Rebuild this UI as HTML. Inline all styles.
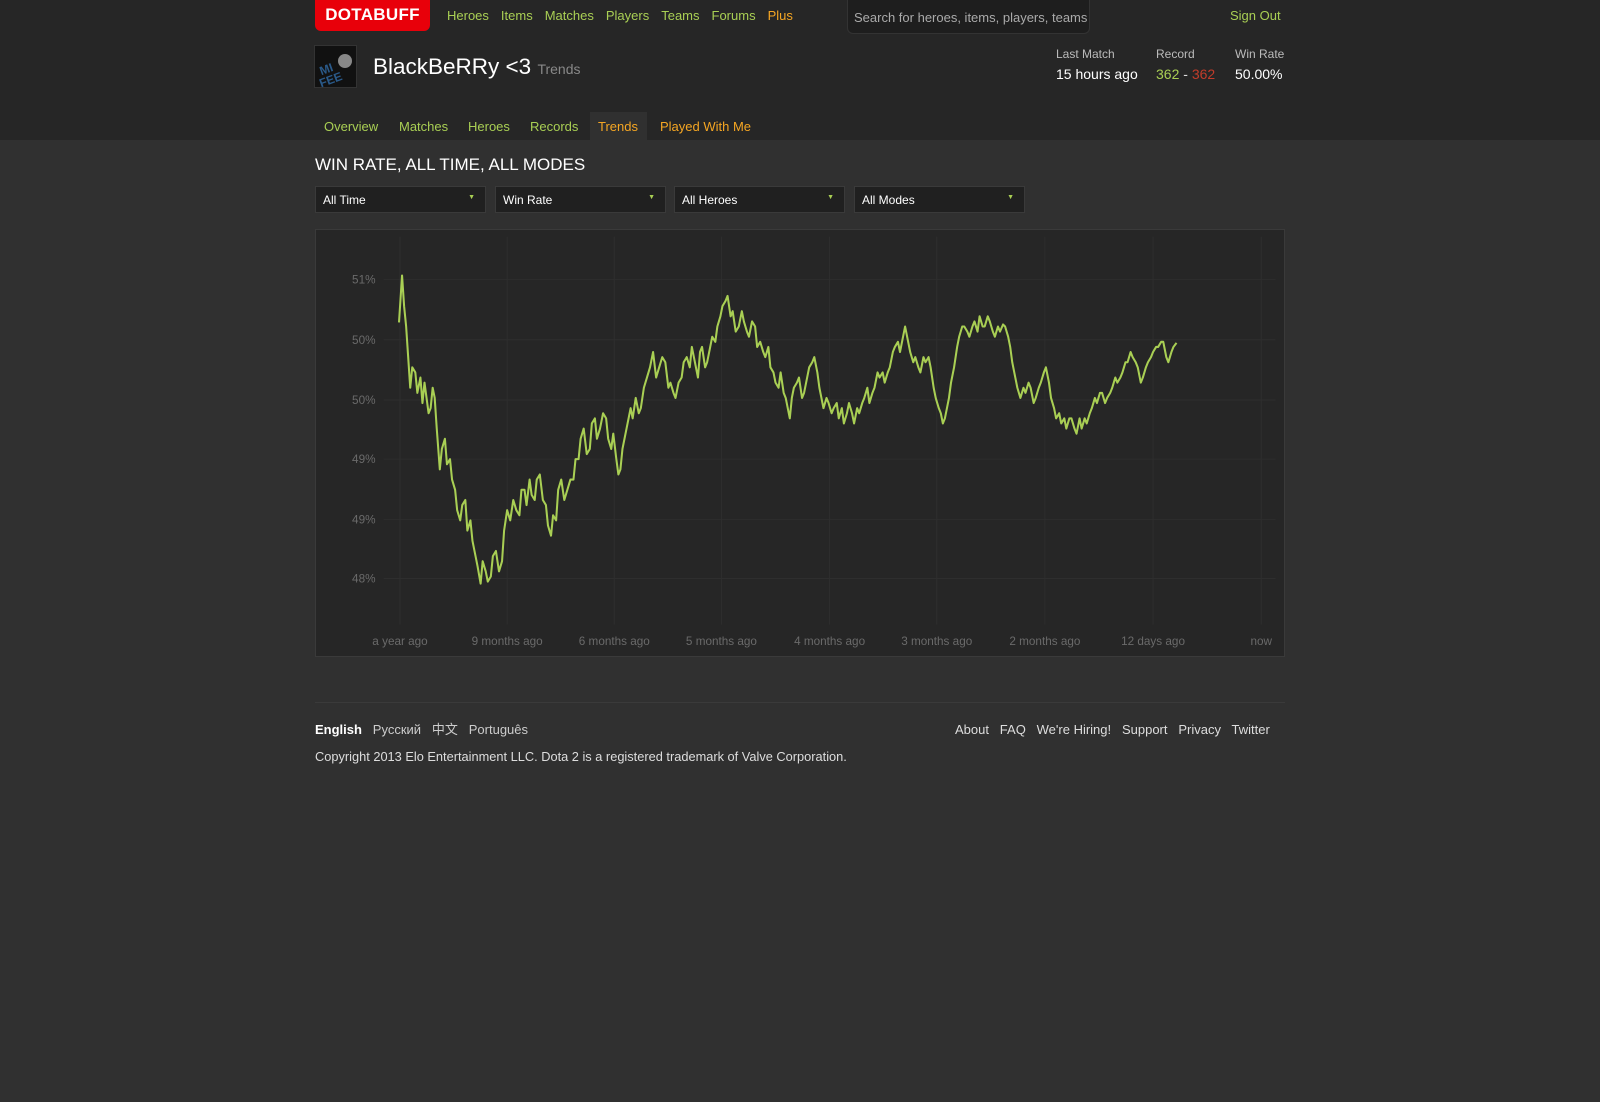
<!DOCTYPE html>
<html><head><meta charset="utf-8">
<style>
*{margin:0;padding:0;box-sizing:border-box}
body{width:1600px;height:1102px;background:#303030;font-family:"Liberation Sans","Noto Sans CJK SC",sans-serif;font-size:13px;color:#ddd;position:relative;overflow:hidden}
.a{position:absolute;white-space:nowrap}
.hdr{position:absolute;left:0;top:0;width:1600px;height:140px;background:#262626}
.g{color:#a9cf54}.o{color:#f5a623}
.logo{left:315px;top:0;width:115px;height:31px;background:#e8000a;border-radius:0 0 6px 6px;color:#fff;font-weight:bold;font-size:17px;text-align:center;line-height:29px;letter-spacing:0.3px}
.nav span{margin-right:12px;font-size:13px}
.search{left:847px;top:0;width:243px;height:34px;background:#1e1e1e;border:1px solid #333;border-top:none;border-radius:0 0 6px 6px;color:#aaa;font-size:13px;padding:10px 6px;overflow:hidden}
.dd{top:186px;height:27px;width:171px;background:#202020;border:1px solid #3a3a3a;color:#fff;font-size:12px;padding:6px 7px}
.dd i{position:absolute;right:10px;top:7px;font-style:normal;color:#a9cf54;font-size:7px}
.chart{left:315px;top:229px;width:970px;height:428px;background:#262626;border:1px solid #3a3a3a}
.tab{font-size:13px}
</style></head><body>
<div class="hdr"></div>
<div class="a logo">DOTABUFF</div>
<div class="a nav g" style="left:447px;top:8px"><span>Heroes</span><span>Items</span><span>Matches</span><span>Players</span><span>Teams</span><span>Forums</span><span class="o">Plus</span></div>
<div class="a search">Search for heroes, items, players, teams</div>
<div class="a g" style="left:1230px;top:8px;font-size:13px">Sign Out</div>
<div class="a" style="left:314px;top:45px;width:43px;height:43px;background:#111;border:1px solid #333">
<svg width="43" height="43"><text x="4" y="24" fill="#2a5a8a" font-size="12" font-weight="bold" font-family="Liberation Sans" transform="rotate(-20 20 20)">MI</text><text x="3" y="36" fill="#2a5a8a" font-size="12" font-weight="bold" font-family="Liberation Sans" transform="rotate(-20 20 30)">FEE</text><circle cx="30" cy="15" r="7" fill="#888"/></svg></div>
<div class="a" style="left:373px;top:54px;font-size:22.5px;color:#fff">BlackBeRRy &lt;3 <span style="font-size:14px;color:#888">Trends</span></div>
<div class="a" style="left:1056px;top:47px;color:#bbb;font-size:12px">Last Match</div>
<div class="a" style="left:1056px;top:66px;color:#fff;font-size:14px">15 hours ago</div>
<div class="a" style="left:1156px;top:47px;color:#bbb;font-size:12px">Record</div>
<div class="a" style="left:1156px;top:66px;font-size:14px"><span class="g">362</span> - <span style="color:#c23c2a">362</span></div>
<div class="a" style="left:1235px;top:47px;color:#bbb;font-size:12px">Win Rate</div>
<div class="a" style="left:1235px;top:66px;color:#fff;font-size:14px">50.00%</div>
<div class="a" style="left:590px;top:112px;width:57px;height:28px;background:#303030"></div>
<div class="a g tab" style="left:324px;top:119px">Overview</div>
<div class="a g tab" style="left:399px;top:119px">Matches</div>
<div class="a g tab" style="left:468px;top:119px">Heroes</div>
<div class="a g tab" style="left:530px;top:119px">Records</div>
<div class="a o tab" style="left:598px;top:119px">Trends</div>
<div class="a o tab" style="left:660px;top:119px">Played With Me</div>
<div class="a" style="left:315px;top:155px;font-size:17px;color:#fff">WIN RATE, ALL TIME, ALL MODES</div>
<div class="a dd" style="left:315px">All Time<i>▼</i></div>
<div class="a dd" style="left:495px">Win Rate<i>▼</i></div>
<div class="a dd" style="left:674px">All Heroes<i>▼</i></div>
<div class="a dd" style="left:854px">All Modes<i>▼</i></div>
<div class="a chart"></div>
<svg class="a" style="left:0;top:0" width="1600" height="1102" viewBox="0 0 1568 1080">
<g stroke="#2e2e2e" stroke-width="1">
<line x1="392" y1="232" x2="392" y2="612"/><line x1="497" y1="232" x2="497" y2="612"/><line x1="602" y1="232" x2="602" y2="612"/><line x1="707" y1="232" x2="707" y2="612"/><line x1="813" y1="232" x2="813" y2="612"/><line x1="918" y1="232" x2="918" y2="612"/><line x1="1024" y1="232" x2="1024" y2="612"/><line x1="1130" y1="232" x2="1130" y2="612"/><line x1="1236" y1="232" x2="1236" y2="612"/>
<line x1="376" y1="274" x2="1250" y2="274"/><line x1="376" y1="333" x2="1250" y2="333"/><line x1="376" y1="392" x2="1250" y2="392"/><line x1="376" y1="450" x2="1250" y2="450"/><line x1="376" y1="509" x2="1250" y2="509"/><line x1="376" y1="567" x2="1250" y2="567"/>
</g>
<g fill="#6a6a6a" font-size="11.5" font-family="Liberation Sans" text-anchor="end">
<text x="368" y="278">51%</text><text x="368" y="337">50%</text><text x="368" y="396">50%</text><text x="368" y="454">49%</text><text x="368" y="513">49%</text><text x="368" y="571">48%</text>
</g>
<g fill="#6a6a6a" font-size="11.5" font-family="Liberation Sans" text-anchor="middle">
<text x="392" y="632">a year ago</text><text x="497" y="632">9 months ago</text><text x="602" y="632">6 months ago</text><text x="707" y="632">5 months ago</text><text x="813" y="632">4 months ago</text><text x="918" y="632">3 months ago</text><text x="1024" y="632">2 months ago</text><text x="1130" y="632">12 days ago</text><text x="1236" y="632">now</text>
</g>
<polyline fill="none" stroke="#a9cf54" stroke-width="2" stroke-linejoin="round" points="391,316 394,270 396,300 398,320 400,350 402,380 404,360 407,365 409,385 412,370 414,395 416,375 418,390 420,405 422,400 424,380 426,390 428,420 431,460 433,440 436,430 438,455 441,450 443,470 446,480 448,500 451,510 453,495 456,490 458,520 461,510 463,530 466,545 468,555 471,572 473,550 476,560 478,570 481,565 483,545 486,540 489,560 492,550 494,520 497,500 500,510 503,490 506,500 509,505 511,480 514,480 516,495 519,470 521,485 524,490 526,470 529,465 532,490 535,495 537,515 540,525 542,505 545,510 547,480 550,470 553,490 556,480 559,470 562,470 564,450 567,450 569,430 572,420 575,445 578,440 580,415 583,410 585,430 588,420 591,405 594,410 596,430 599,440 601,425 604,450 606,465 608,460 610,440 612,430 615,415 618,400 620,410 623,390 626,405 628,400 631,380 634,370 637,360 640,345 643,370 646,360 649,350 652,355 655,380 657,375 660,385 662,390 665,375 668,370 670,355 673,350 676,360 678,340 681,355 684,370 686,345 688,340 691,360 693,355 696,340 698,330 701,335 703,320 706,310 708,300 711,295 713,290 716,310 718,305 721,325 724,320 727,305 729,315 732,325 734,330 737,315 740,320 742,340 745,335 748,345 750,350 753,340 755,360 758,365 760,375 763,380 765,365 768,385 770,390 772,400 774,410 776,390 778,380 781,375 783,370 786,390 788,385 791,370 793,360 796,355 798,350 801,365 803,380 805,390 807,400 810,390 812,395 815,405 817,400 820,395 822,410 825,400 827,415 830,405 832,395 835,405 837,415 840,400 842,405 845,395 847,390 850,380 852,395 855,385 857,380 860,365 862,370 865,365 867,375 870,365 872,360 875,345 877,340 880,335 882,345 885,330 887,320 890,335 892,345 895,355 897,350 900,360 902,365 905,350 907,355 910,350 912,360 915,380 917,390 920,400 922,405 924,415 926,410 928,400 930,390 932,375 935,360 938,340 940,330 943,320 945,320 948,325 950,330 953,320 955,315 958,325 960,310 963,320 965,320 968,310 970,315 973,325 975,330 978,320 980,325 983,318 985,320 988,330 990,340 992,355 995,370 997,380 1000,390 1003,380 1005,385 1008,375 1010,380 1013,395 1015,390 1018,380 1020,375 1023,365 1025,360 1028,375 1030,390 1033,400 1035,410 1038,405 1040,415 1043,410 1045,420 1048,410 1050,410 1053,420 1055,425 1058,410 1060,420 1063,410 1065,415 1068,405 1070,400 1073,390 1075,395 1078,385 1080,385 1083,395 1085,390 1088,385 1090,380 1093,370 1095,375 1098,370 1100,365 1103,355 1105,355 1108,345 1110,350 1113,355 1115,360 1118,375 1120,370 1123,360 1125,355 1128,350 1130,345 1133,340 1135,340 1138,335 1140,335 1143,350 1145,355 1148,345 1150,340 1153,336"/>
</svg>
<div class="a" style="left:315px;top:702px;width:970px;height:1px;background:#3a3a3a"></div>
<div class="a" style="left:315px;top:719px;font-size:13px"><b style="color:#fff">English</b>&nbsp;&nbsp; <span style="color:#ccc">Русский</span>&nbsp;&nbsp; <span style="color:#ccc">中文</span>&nbsp;&nbsp; <span style="color:#ccc">Português</span></div>
<div class="a" style="left:955px;top:722px;font-size:13px;color:#ddd;word-spacing:0">About&nbsp;&nbsp; FAQ&nbsp;&nbsp; We're Hiring!&nbsp;&nbsp; Support&nbsp;&nbsp; Privacy&nbsp;&nbsp; Twitter</div>
<div class="a" style="left:315px;top:749px;font-size:12.8px;color:#ddd">Copyright 2013 Elo Entertainment LLC. Dota 2 is a registered trademark of Valve Corporation.</div>
</body></html>
